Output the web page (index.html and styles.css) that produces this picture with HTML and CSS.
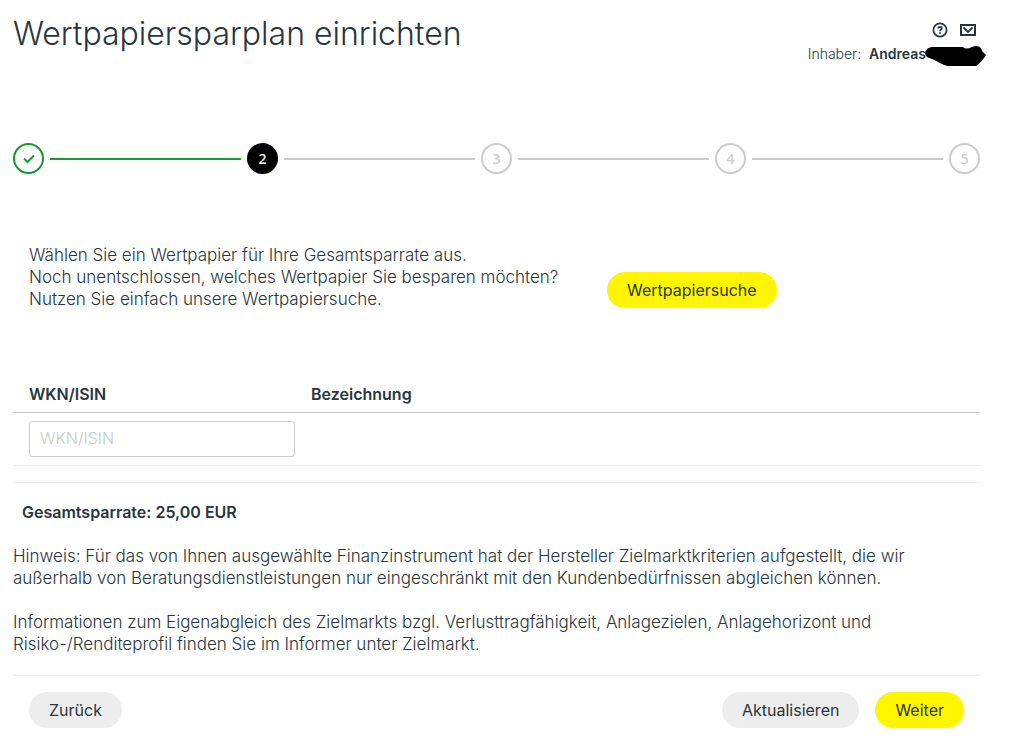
FILE: index.html
```html
<!DOCTYPE html>
<html lang="de">
<head>
    <meta charset="UTF-8">
    <meta name="viewport" content="width=device-width, initial-scale=1.0">
    <title>Wertpapiersparplan einrichten</title>
    <link rel="stylesheet" href="styles.css">
</head>
<body>
    <div class="page">
        <header class="page-header">
            <h1>Wertpapiersparplan einrichten</h1>
            <div class="header-side">
                <div class="header-icons">
                    <button type="button" class="icon-button" aria-label="Hilfe">
                        <svg width="16" height="16" viewBox="0 0 16 16" fill="none" stroke="currentColor" stroke-width="1.7">
                            <circle cx="8" cy="8" r="6.6"/>
                            <path d="M6.1 6.6C6.1 5.2 6.9 4.8 8 4.8S9.9 5.4 9.9 6.3C9.9 7.6 8 7.5 8 9.2M8 10.3V12"/>
                        </svg>
                    </button>
                    <button type="button" class="icon-button" aria-label="Nachrichten">
                        <svg width="16" height="12" viewBox="0 0 16 12" fill="none" stroke="currentColor">
                            <path d="M1 1H15V11H1Z" stroke-width="2"/>
                            <path d="M3.5 3.5L8 8L12.5 3.5" stroke-width="1.8"/>
                        </svg>
                    </button>
                </div>
                <div class="owner">
                    <span>Inhaber:</span>
                    <strong>Andreas</strong>
                    <svg class="redaction" width="61" height="21" viewBox="0 0 61 21" aria-hidden="true">
                        <path d="M0 7C1 3 4 1 8 1H38C43 5 46 0 51 0C55 0 57 3 57 5L61 9C58 14 54 18 51 20H23C17 19 12 15 7 13C3 12 0 10 0 7Z"/>
                    </svg>
                </div>
            </div>
        </header>

        <ol class="steps">
            <li class="step done">
                <span class="circle">
                    <svg width="12" height="10" viewBox="0 0 12 10" fill="none" stroke="currentColor" stroke-width="2">
                        <path d="M1 4.5L4.5 8L11 1.5"/>
                    </svg>
                </span>
            </li>
            <li class="step active" aria-current="step"><span class="circle">2</span></li>
            <li class="step"><span class="circle">3</span></li>
            <li class="step"><span class="circle">4</span></li>
            <li class="step"><span class="circle">5</span></li>
        </ol>

        <section class="intro">
            <p>
                Wählen Sie ein Wertpapier für Ihre Gesamtsparrate aus.<br>
                Noch unentschlossen, welches Wertpapier Sie besparen möchten?<br>
                Nutzen Sie einfach unsere Wertpapiersuche.
            </p>
            <button type="button" class="button primary">Wertpapiersuche</button>
        </section>

        <form>
            <table class="papers">
                <thead>
                    <tr>
                        <th class="col-wkn"><label for="wkn">WKN/ISIN</label></th>
                        <th>Bezeichnung</th>
                    </tr>
                </thead>
                <tbody>
                    <tr>
                        <td class="col-wkn"><input type="text" id="wkn" name="wkn" placeholder="WKN/ISIN"></td>
                        <td></td>
                    </tr>
                </tbody>
            </table>

            <p class="total">Gesamtsparrate: 25,00 EUR</p>

            <div class="notes">
                <p>
                    Hinweis: Für das von Ihnen ausgewählte Finanzinstrument hat der Hersteller Zielmarktkriterien aufgestellt, die wir<br>
                    außerhalb von Beratungsdienstleistungen nur eingeschränkt mit den Kundenbedürfnissen abgleichen können.
                </p>
                <p>
                    Informationen zum Eigenabgleich des Zielmarkts bzgl. Verlusttragfähigkeit, Anlagezielen, Anlagehorizont und<br>
                    Risiko-/Renditeprofil finden Sie im Informer unter Zielmarkt.
                </p>
            </div>

            <div class="actions">
                <button type="button" class="button back">Zurück</button>
                <button type="button" class="button">Aktualisieren</button>
                <button type="submit" class="button primary">Weiter</button>
            </div>
        </form>
    </div>
</body>
</html>
```

FILE: styles.css
```css
* {
    box-sizing: border-box;
}
body {
    margin: 0;
    background-color: #fff;
    color: #28363d;
    font-family: Inter, "Liberation Sans", sans-serif;
    font-size: 16px;
    font-weight: 300;
    line-height: 22px;
}
h1, p {
    margin: 0;
}
.page {
    padding: 12px 29px 12px 13px;
}
.page-header {
    display: flex;
    justify-content: space-between;
    align-items: flex-start;
}
h1 {
    font-size: 32px;
    font-weight: 300;
    line-height: 44px;
}
.header-side {
    padding-top: 10px;
}
.header-icons {
    display: flex;
    justify-content: flex-end;
    align-items: center;
    gap: 12px;
    height: 16px;
    padding-right: 4px;
}
.icon-button {
    display: flex;
    padding: 0;
    border: none;
    background: none;
    color: #28363d;
    cursor: pointer;
}
.owner {
    display: flex;
    gap: 8px;
    position: relative;
    padding: 6px 54px 0 0;
    font-size: 14px;
    line-height: 20px;
}
.owner strong {
    font-weight: 600;
}
.redaction {
    position: absolute;
    top: 8px;
    right: -6px;
}

/* Schritte */
.steps {
    display: flex;
    margin: 79px 0 0;
    padding: 0;
    list-style: none;
}
.step {
    display: flex;
    flex: 1;
    align-items: center;
    color: #ccc;
}
.step:last-child {
    flex: none;
}
.step:not(:last-child)::after {
    content: "";
    flex: 1;
    height: 2px;
    margin: 0 6px;
    background-color: currentColor;
}
.circle {
    display: flex;
    align-items: center;
    justify-content: center;
    width: 31px;
    height: 31px;
    border: 2px solid currentColor;
    border-radius: 50%;
    font-family: "Noto Sans", sans-serif;
    font-size: 14px;
    font-weight: 500;
}
.step.done {
    color: #149a35;
}
.step.active .circle {
    border-color: #000;
    background-color: #000;
    color: #fff;
}

.intro {
    display: flex;
    align-items: center;
    padding: 70px 16px 0;
}
.intro p {
    flex: 0 0 578px;
}
.intro .button {
    margin-top: 26px;
}
.intro p,
.notes {
    font-size: 17px;
}
.button {
    height: 36px;
    padding: 0 20px;
    border: none;
    border-radius: 18px;
    background-color: #ededed;
    color: #28363d;
    font-family: inherit;
    font-size: 16px;
    font-weight: 400;
    cursor: pointer;
}
.button.primary {
    background-color: #fff500;
}

/* Tabelle */
.papers {
    width: 100%;
    margin-top: 67px;
    border-collapse: collapse;
    table-layout: fixed;
}
.papers th {
    padding: 6px 0 7px 16px;
    border-bottom: 1px solid #ccc;
    font-weight: 600;
    text-align: left;
}
.papers td {
    padding: 8px 0 8px 16px;
    border-bottom: 1px solid #ededed;
}
.papers .col-wkn {
    width: 282px;
}
.papers input {
    display: block;
    width: 100%;
    height: 36px;
    padding: 0 10px 2px;
    border: 1px solid #ccc;
    border-radius: 3px;
    color: #28363d;
    font-family: inherit;
    font-size: 16px;
    font-weight: 300;
}
.papers input::placeholder {
    color: #c5ccc5;
}

.total {
    margin-top: 16px;
    padding: 18px 9px 0;
    border-top: 1px solid #ededed;
    font-weight: 600;
}
.notes {
    display: grid;
    gap: 22px;
    padding: 22px 0 20px;
}
.actions {
    display: flex;
    gap: 16px;
    padding: 16px 16px 0;
    border-top: 1px solid #ededed;
}
.back {
    margin-right: auto;
}
```
